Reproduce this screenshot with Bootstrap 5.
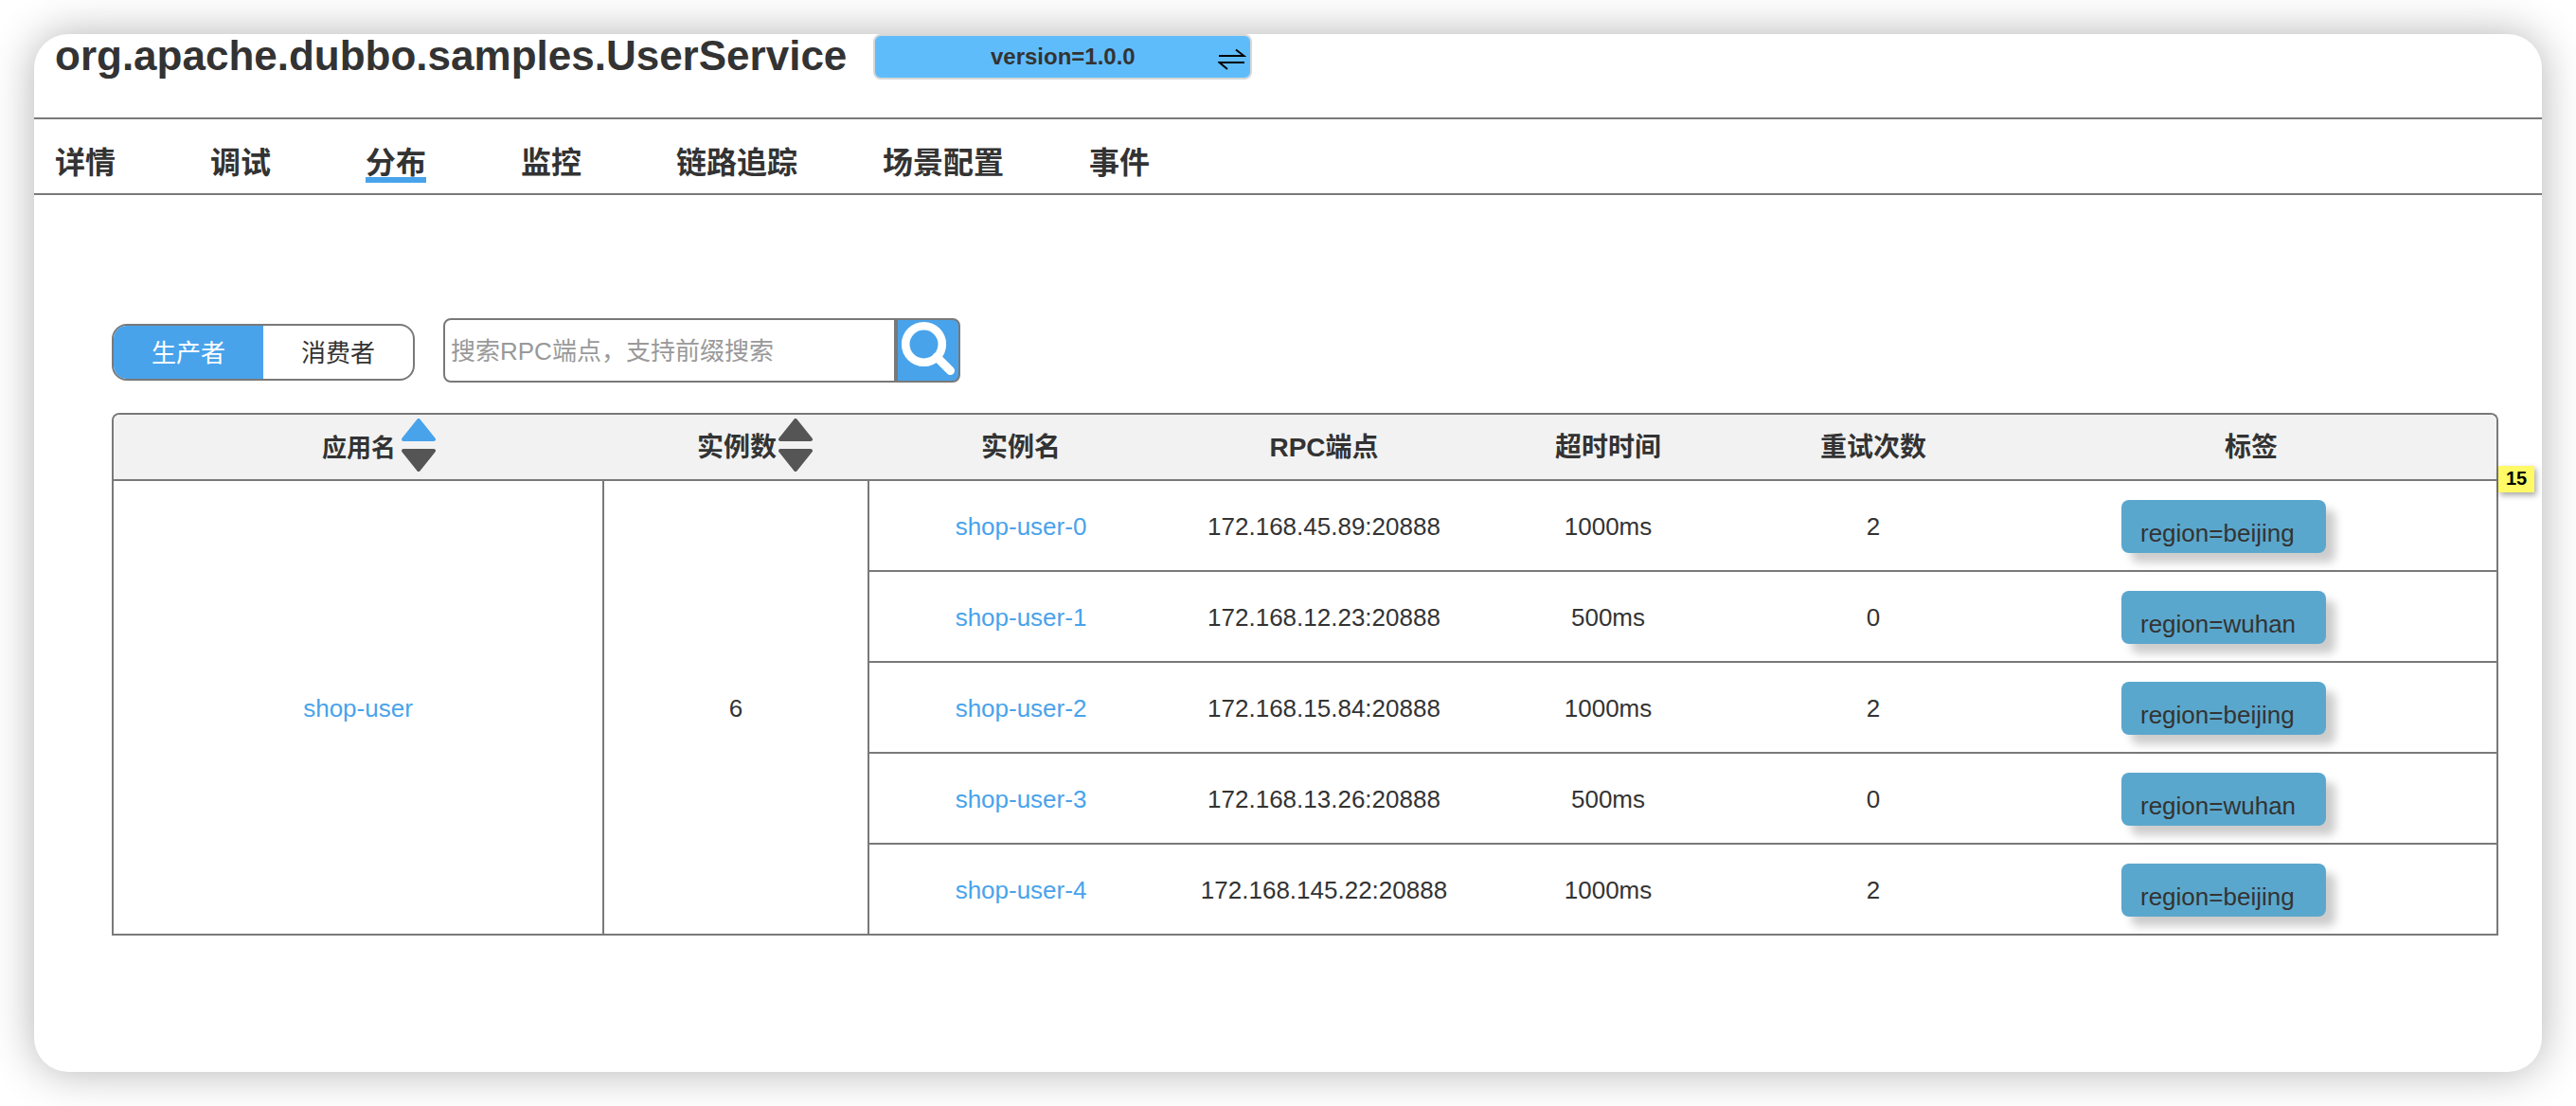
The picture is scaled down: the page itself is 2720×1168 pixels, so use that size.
<!DOCTYPE html>
<html lang="zh-CN">
<head>
<meta charset="utf-8">
<meta name="viewport" content="width=device-width, initial-scale=1">
<title>org.apache.dubbo.samples.UserService</title>
<link href="https://cdn.jsdelivr.net/npm/bootstrap@5.3.0/dist/css/bootstrap.min.css" rel="stylesheet">
<style>
  :root { --line: #797979; --ink: #333; --accent: #49a3eb; }
  body { font-family: "Liberation Sans", Arial, "Noto Sans CJK SC", sans-serif; font-size: 26px; line-height: 30px; color: var(--ink); padding: 36px; background: #fff; }
  .panel { min-height: calc(100vh - 72px); border-radius: 36px; box-shadow: 0 0 46px rgba(0,0,0,.3); background: #fff; }
  .panel-head { height: 90px; padding-left: 22px; gap: 28px; border-bottom: 2px solid var(--line); }
  .service-name { font-size: 44px; line-height: 46px; font-weight: 700; }
  .version-btn { width: 400px; height: 48px; border: 2px solid #d7d7d7; border-radius: 8px; background: #5fbcfb; color: var(--ink); font-size: 24px; line-height: 28px; font-weight: 700; padding: 0; }
  .version-btn svg { right: 4px; top: 12px; }
  .tab-bar { height: 80px; padding: 27px 0 0 22px; gap: 100px; border-bottom: 2px solid var(--line); }
  .tab-bar a { font-size: 32px; line-height: 38px; font-weight: 700; color: var(--ink); height: 40px; }
  .tab-bar a.active { border-bottom: 6px solid var(--accent); }
  .tab-bar a.wide-tab { margin-right: -10px; }
  .content-area { padding: 130px 46px 0 82px; }
  .tool-row { gap: 30px; margin-bottom: 32px; }
  .side-switch { height: 60px; margin-top: 6px; border: 2px solid var(--line); border-radius: 16px; }
  .side-switch label { width: 158px; height: 56px; line-height: 58px; cursor: pointer; }
  .side-switch .btn-check:checked + label { background: var(--accent); color: #fff; }
  .search-box input { width: 478px; height: 68px; border: 2px solid var(--line); border-radius: 8px 0 0 8px; padding: 2px 6px 0; color: var(--ink); }
  .search-box input::placeholder { color: #999; opacity: 1; }
  .search-box button { width: 68px; height: 68px; border: 2px solid var(--line); border-radius: 0 8px 8px 0; background: var(--accent); padding: 0; }
  .dist-table { width: 100%; table-layout: fixed; border-collapse: separate; border-spacing: 0; border: 2px solid var(--line); border-bottom: 0; border-radius: 8px 8px 0 0; text-align: center; }
  .dist-table th { height: 70px; padding: 2px 0 0; background: #f2f2f2; border-bottom: 2px solid var(--line); font-size: 28px; line-height: 32px; font-weight: 700; }
  .dist-table th:first-child { border-top-left-radius: 6px; }
  .dist-table th:last-child { border-top-right-radius: 6px; }
  .dist-table td { padding: 20px 0 18px; height: 96px; border-bottom: 2px solid var(--line); }
  .dist-table td.group-cell { border-right: 2px solid var(--line); }
  .dist-table td.tag-cell { padding-left: 122px; }
  .dist-table a { color: var(--accent); text-decoration: none; }
  .w-md { width: 280px; }
  .w-lg { width: 320px; }
  .sort-btn { border: 0; background: none; padding: 0; font-weight: 700; color: var(--ink); line-height: 32px; }
  .sort-btn svg { left: 100%; top: -15px; margin-left: 2px; }
  .sort-btn.app-sort { font-size: 26px; }
  .sort-btn.app-sort svg { margin-left: 6px; }
  .region-tag { width: 216px; height: 56px; border-radius: 8px; background: #5aa7cd; box-shadow: 10px 10px 10px rgba(0,0,0,.2); padding: 20px 20px 0; text-align: left; }
  .note-mark { left: 100%; top: 56px; width: 38px; height: 28px; background: #fffa65; color: #000; font-size: 20px; line-height: 26px; font-weight: 700; box-shadow: 2px 3px 6px rgba(0,0,0,.35); text-align: center; }
</style>
</head>
<body>
<main class="panel">
  <header class="panel-head d-flex align-items-start">
    <h1 class="service-name m-0">org.apache.dubbo.samples.UserService</h1>
    <button type="button" class="version-btn position-relative">version=1.0.0
      <svg class="position-absolute" width="30" height="26" viewBox="0 0 30 26" fill="none" stroke="#000" stroke-width="2" aria-hidden="true"><path d="M1 9H27.500L19 2.500M28 16H1.500L10 23"/></svg>
    </button>
  </header>
  <nav class="tab-bar nav flex-nowrap" aria-label="服务">
    <a class="text-decoration-none" href="#">详情</a>
    <a class="text-decoration-none" href="#">调试</a>
    <a class="text-decoration-none active" href="#" aria-current="page">分布</a>
    <a class="text-decoration-none" href="#">监控</a>
    <a class="text-decoration-none wide-tab" href="#">链路追踪</a>
    <a class="text-decoration-none wide-tab" href="#">场景配置</a>
    <a class="text-decoration-none" href="#">事件</a>
  </nav>
  <section class="content-area">
    <form class="tool-row d-flex align-items-start">
      <div class="side-switch d-flex overflow-hidden text-center">
        <input class="btn-check" type="radio" name="side" id="provider" checked><label for="provider">生产者</label>
        <input class="btn-check" type="radio" name="side" id="consumer"><label for="consumer">消费者</label>
      </div>
      <div class="search-box d-flex">
        <input type="text" placeholder="搜索RPC端点，支持前缀搜索" aria-label="搜索RPC端点">
        <button type="button" class="d-flex" aria-label="搜索">
          <svg width="64" height="64" viewBox="0 0 64 64" fill="none" stroke="#fff" aria-hidden="true"><circle cx="27.500" cy="25.500" r="19.300" stroke-width="8.600"/><path d="M41 39L55.500 53.500" stroke-width="9" stroke-linecap="round"/></svg>
        </button>
      </div>
    </form>
    <div class="position-relative">
      <table class="dist-table">
        <colgroup><col><col class="w-md"><col class="w-lg"><col class="w-lg"><col class="w-md"><col class="w-md"><col></colgroup>
        <thead>
          <tr>
            <th scope="col"><button type="button" class="sort-btn app-sort position-relative">应用名<svg class="position-absolute" width="36" height="56" viewBox="0 0 36 56" stroke-width="4" stroke-linejoin="round" aria-hidden="true"><path d="M18 2L34 22H2Z" fill="#49a3eb" stroke="#49a3eb"/><path d="M18 54L34 34H2Z" fill="#555" stroke="#555"/></svg></button></th>
            <th scope="col"><button type="button" class="sort-btn position-relative">实例数<svg class="position-absolute" width="36" height="56" viewBox="0 0 36 56" fill="#555" stroke="#555" stroke-width="4" stroke-linejoin="round" aria-hidden="true"><path d="M18 2L34 22H2ZM18 54L34 34H2Z"/></svg></button></th>
            <th scope="col">实例名</th>
            <th scope="col">RPC端点</th>
            <th scope="col">超时时间</th>
            <th scope="col">重试次数</th>
            <th scope="col">标签</th>
          </tr>
        </thead>
        <tbody>
          <tr><td class="group-cell" rowspan="5"><a href="#">shop-user</a></td><td class="group-cell" rowspan="5">6</td><td><a href="#">shop-user-0</a></td><td>172.168.45.89:20888</td><td>1000ms</td><td>2</td><td class="tag-cell"><div class="region-tag">region=beijing</div></td></tr>
          <tr><td><a href="#">shop-user-1</a></td><td>172.168.12.23:20888</td><td>500ms</td><td>0</td><td class="tag-cell"><div class="region-tag">region=wuhan</div></td></tr>
          <tr><td><a href="#">shop-user-2</a></td><td>172.168.15.84:20888</td><td>1000ms</td><td>2</td><td class="tag-cell"><div class="region-tag">region=beijing</div></td></tr>
          <tr><td><a href="#">shop-user-3</a></td><td>172.168.13.26:20888</td><td>500ms</td><td>0</td><td class="tag-cell"><div class="region-tag">region=wuhan</div></td></tr>
          <tr><td><a href="#">shop-user-4</a></td><td>172.168.145.22:20888</td><td>1000ms</td><td>2</td><td class="tag-cell"><div class="region-tag">region=beijing</div></td></tr>
        </tbody>
      </table>
      <span class="note-mark position-absolute">15</span>
    </div>
  </section>
</main>
<script src="https://cdn.jsdelivr.net/npm/bootstrap@5.3.0/dist/js/bootstrap.bundle.min.js"></script>
</body>
</html>
